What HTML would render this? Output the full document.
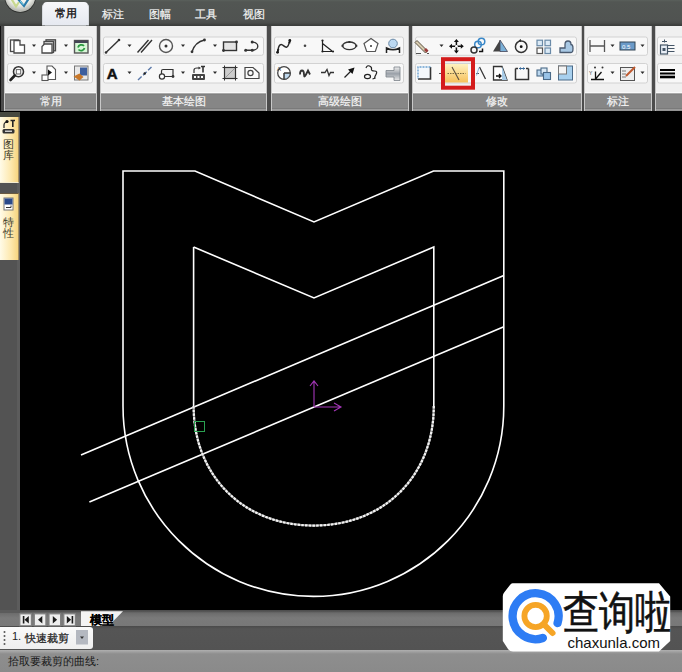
<!DOCTYPE html>
<html><head><meta charset="utf-8">
<style>
*{margin:0;padding:0;box-sizing:border-box}
html,body{width:682px;height:672px;overflow:hidden;background:#000;font-family:"Liberation Sans",sans-serif}
.a{position:absolute}
#top{left:0;top:0;width:682px;height:26px;background:linear-gradient(#5a605c 0,#525653 2px,#505351 20px,#4a4c4a 23px,#3c3e3c 25px)}
#rib{left:0;top:26px;width:682px;height:86px;background:#4c4c4c}
.grp{position:absolute;top:26px;height:85px;background:#f0f0f0;border-left:1px solid #c8c8c8;border-right:1px solid #c8c8c8}
.gt{position:absolute;left:0;right:0;bottom:0;height:19.5px;background:linear-gradient(#fafafa 0,#fafafa 1px,#7a7a7a 1.8px,#868686 3px,#868686 15.5px,#7a7a7a 16.5px,#9a9a9a 17.5px,#8a8a8a 19.5px);color:#f6f6f6;font-size:11px;text-align:center;line-height:18px;-webkit-text-stroke:0.2px #f6f6f6}
.bg{position:absolute;height:18px;border:1px solid #d6d6d6;border-radius:2px;background:#f6f6f6}
.tab{color:#f4f4f4;font-size:11px;top:7px;-webkit-text-stroke:0.2px #f4f4f4}
#canvas{left:20px;top:112px;width:662px;height:498px;background:#000}
#lstrip{left:0;top:112px;width:20px;height:498px;background:linear-gradient(90deg,#535353 0,#535353 16.5px,#5c5c5c 17px,#5c5c5c 20px)}
</style></head><body>
<div class="a" id="top"></div>
<div class="a" id="rib"></div>
<!-- logo -->
<svg class="a" style="left:0;top:0" width="42" height="18">
 <defs><radialGradient id="lg" cx="50%" cy="35%" r="60%"><stop offset="0" stop-color="#ffffff"/><stop offset=".7" stop-color="#eef0ea"/><stop offset="1" stop-color="#b8bab4"/></radialGradient></defs>
 <circle cx="20.2" cy="-3" r="15.8" fill="#2e302e"/>
 <circle cx="20.2" cy="-3" r="15" fill="url(#lg)"/>
 <path d="M11.5,-1 L16,6.5 L19,2" stroke="#c8d890" stroke-width="2.2" fill="none"/>
 <path d="M18,-1 L24,6 L28.5,-1" stroke="#2a7aa8" stroke-width="2.2" fill="none"/>
 <path d="M20,1 L23.5,5" stroke="#7ad8f0" stroke-width="1" fill="none"/>
</svg>
<!-- active tab -->
<div class="a" style="left:43px;top:2px;width:44.5px;height:22.5px;background:linear-gradient(#f6f7fa,#e6e9f0);border-radius:4px 4px 0 0;box-shadow:-1.5px 1px 0 -0.5px #d8dbe0,1.5px 1px 0 -0.5px #d8dbe0"></div>
<div class="a" style="left:54.5px;top:6px;font-size:11px;color:#111;-webkit-text-stroke:0.35px #111">常用</div>
<div class="a tab" style="left:102px">标注</div>
<div class="a tab" style="left:149px">图幅</div>
<div class="a tab" style="left:195px">工具</div>
<div class="a tab" style="left:243px">视图</div>

<div class="grp" style="left:4px;width:93px"><div class="gt">常用</div></div>
<div class="grp" style="left:100px;width:167px"><div class="gt">基本绘图</div></div>
<div class="grp" style="left:271px;width:138px"><div class="gt">高级绘图</div></div>
<div class="grp" style="left:412px;width:170px"><div class="gt">修改</div></div>
<div class="grp" style="left:584px;width:68px"><div class="gt">标注</div></div>
<div class="grp" style="left:655px;width:40px"><div class="gt"></div></div>


<svg class="a" style="left:0;top:0" width="682" height="112">
 <defs>
  <linearGradient id="gy" x1="0" y1="0" x2="0" y2="1"><stop offset="0" stop-color="#fff3c0"/><stop offset="1" stop-color="#f6c05a"/></linearGradient>
  <linearGradient id="cyl" x1="0" y1="0" x2="0" y2="1"><stop offset="0" stop-color="#f0f0f0"/><stop offset=".5" stop-color="#9aa0a8"/><stop offset="1" stop-color="#e8e8e8"/></linearGradient>
 </defs>
 <!-- button group frames -->
 <g fill="#f8f8f8" stroke="#d2d2d2" stroke-width="1">
  <rect x="7.5" y="37" width="85" height="18.3" rx="2"/>
  <rect x="7.5" y="63.5" width="85" height="19.5" rx="2"/>
  <rect x="103.5" y="37" width="160" height="18.3" rx="2"/>
  <rect x="103.5" y="63.5" width="160" height="19.5" rx="2"/>
  <rect x="274.5" y="37" width="129" height="18.3" rx="2"/>
  <rect x="274.5" y="63.5" width="129" height="19.5" rx="2"/>
  <rect x="415.5" y="37" width="161" height="18.3" rx="2"/>
  <rect x="415.5" y="63.5" width="161" height="19.5" rx="2"/>
  <rect x="587.5" y="37" width="60" height="18.3" rx="2"/>
  <rect x="587.5" y="63.5" width="60" height="19.5" rx="2"/>
  <rect x="657.5" y="37" width="40" height="18.3" rx="2"/>
  <rect x="657.5" y="63.5" width="40" height="19.5" rx="2"/>
 </g>
 <!-- dropdown arrows -->
 <g fill="#2a2a2a">
  <path d="M32,44.5h4l-2,2.5z"/><path d="M64,44.5h4l-2,2.5z"/>
  <path d="M32,71.5h4l-2,2.5z"/><path d="M64,71.5h4l-2,2.5z"/>
  <path d="M127.5,44.5h4l-2,2.5z"/><path d="M181,44.5h4l-2,2.5z"/><path d="M213,44.5h4l-2,2.5z"/>
  <path d="M127.5,71.5h4l-2,2.5z"/><path d="M181,71.5h4l-2,2.5z"/><path d="M213,71.5h4l-2,2.5z"/>
  <path d="M439.5,44.5h4l-2,2.5z"/>
  <path d="M610.5,44.5h4l-2,2.5z"/><path d="M640.5,44.5h4l-2,2.5z"/>
  <path d="M610.5,71.5h4l-2,2.5z"/><path d="M640.5,71.5h4l-2,2.5z"/>
 </g>
 <!-- G1 R1 -->
 <g fill="#fff" stroke="#4a4a4a" stroke-width="1.3">
  <rect x="10.5" y="40" width="8" height="11.5"/>
  <path d="M14,40.5h6v4.5h4.5v8h-10.5z"/>
  <rect x="46" y="39.8" width="9.5" height="11" fill="#bbb"/>
  <rect x="44" y="41.5" width="9.5" height="11" fill="#ddd"/>
  <path d="M44.5,44h7.5v9h-10v-6.5z"/>
 </g>
 <rect x="74.5" y="40.5" width="13.5" height="12.5" fill="#d8f5d8" stroke="#555" stroke-width="1.4"/>
 <rect x="74.5" y="40.5" width="13.5" height="2.5" fill="#445"/>
 <path d="M78,47.5a3.5,3.5 0 0 1 6,-1.5M84.5,48a3.5,3.5 0 0 1 -6,1.5" fill="none" stroke="#2a9a40" stroke-width="1.8"/>
 <!-- G1 R2 -->
 <circle cx="18.5" cy="71.7" r="5" fill="#fff" stroke="#333" stroke-width="1.6"/>
 <rect x="16.3" y="69.6" width="4.4" height="4.4" fill="none" stroke="#666" stroke-width="1"/>
 <path d="M14.8,75.5L10.5,80" stroke="#222" stroke-width="2.6" stroke-linecap="round"/>
 <g fill="#fff" stroke="#555" stroke-width="1.1">
  <path d="M47,66h5l3.5,3.5v10h-8.5z"/>
  <rect x="42" y="75" width="6" height="5.5"/>
 </g>
 <path d="M48,69.5l4,3l-4,3z" fill="#111"/>
 <rect x="74.5" y="66" width="13.5" height="14" fill="#e8e8e8" stroke="#777" stroke-width="1"/>
 <rect x="80" y="67.5" width="7" height="8" fill="#3c5e9e"/>
 <path d="M73.5,76.5l6,-3l4,3.5l-4,3.5z" fill="#c8782a"/>
 <!-- G2 R1 -->
 <g stroke="#333" stroke-width="1.4" fill="none">
  <path d="M106,52.5L119,40"/>
  <path d="M137.5,52.5L148.5,40M141,52.5L152,40"/>
  <circle cx="166" cy="46" r="6.5" stroke="#555"/>
  <path d="M192,51.8Q195,42 204.5,40"/>
  <rect x="223.5" y="42" width="13" height="8.5" fill="#e4e4e4"/>
  <path d="M245.7,50.2h6.5a5.6,4.05 0 0 0 0,-8.1"/>
 </g>
 <g fill="#333">
  <circle cx="106" cy="52.5" r="1.3"/><circle cx="119" cy="40" r="1.3"/>
  <circle cx="166" cy="46" r="1.5"/>
  <circle cx="192" cy="51.8" r="1.4"/><circle cx="204.5" cy="40" r="1.4"/>
  <circle cx="236.5" cy="42" r="1.4"/><circle cx="223.5" cy="50.5" r="1.4"/>
  <circle cx="245.7" cy="50.2" r="1.5"/><circle cx="252.2" cy="50.2" r="1.5"/><circle cx="252.2" cy="42.1" r="1.5"/>
 </g>
 <!-- G2 R2 -->
 <text x="106.8" y="78.8" font-family="Liberation Sans" font-weight="bold" font-size="15" fill="#111" stroke="#111" stroke-width="0.5">A</text>
 <path d="M138,80L151.5,67" stroke="#5a78a8" stroke-width="1.4" stroke-dasharray="5 2"/>
 <circle cx="144.7" cy="73.5" r="1.2" fill="#222"/>
 <g stroke="#333" stroke-width="1.2" fill="none">
  <path d="M161.5,76v-5q0,-1.5 1.5,-1.5h10v7h-9" fill="#f4f4f4"/>
  <circle cx="162" cy="76.5" r="2.6" fill="#fff"/>
 </g>
 <circle cx="173" cy="76.5" r="1.4" fill="#333"/>
 <g fill="#333">
  <rect x="192" y="74" width="13" height="6" rx="1" fill="#444"/>
 </g>
 <g fill="#fff"><rect x="194" y="76" width="2" height="2"/><rect x="197.5" y="76" width="2" height="2"/><rect x="201" y="76" width="2" height="2"/></g>
 <path d="M194,73v-3q0,-2 3,-2h2" stroke="#333" stroke-width="1.2" fill="none"/>
 <path d="M198.5,66.5l2.5,1.5l-2.5,1.5z" fill="#333"/>
 <path d="M201,66.5h4M203,66.5v6" stroke="#333" stroke-width="1.6"/>
 <rect x="224.5" y="67.5" width="11" height="11" fill="#ccc" stroke="#333" stroke-width="1.2"/>
 <path d="M222.5,67.5h15M222.5,78.5h15M224.5,65.5v15M235.5,65.5v15" stroke="#333" stroke-width="1"/>
 <path d="M225,78l10,-10" stroke="#999" stroke-width="1"/>
 <path d="M245,67.5h8l6,5.5v5.5h-14z" fill="#fafafa" stroke="#444" stroke-width="1.2"/>
 <circle cx="250.5" cy="73" r="2.6" fill="none" stroke="#444" stroke-width="1.2"/>
 <!-- G3 R1 -->
 <path d="M277.8,52 C278.2,47 279.2,44.6 281.2,44.6 C283.2,44.6 284.5,47.6 286.5,47.2 C288.5,46.8 289,43.5 289.6,41" stroke="#2a2a2a" stroke-width="1.5" fill="none"/>
 <path d="M276.5,53.5l0.8,-4.5l2.2,0.5z M290.8,39.5l-0.5,4l-2.2,-0.5z" fill="#1a1a1a"/>
 <circle cx="289.8" cy="40.5" r="1.4" fill="#1a1a1a"/><circle cx="277.6" cy="52.3" r="1.4" fill="#1a1a1a"/>
 <circle cx="305" cy="45.8" r="1.3" fill="#444"/>
 <path d="M322.5,40.5v11h10.5M322.5,43.5l9.5,7.5" stroke="#222" stroke-width="1.2" fill="none"/>
 <circle cx="322.5" cy="40.5" r="1.1" fill="#222"/><circle cx="333" cy="51.5" r="1.1" fill="#222"/><circle cx="322.5" cy="51.5" r="1.1" fill="#222"/>
 <ellipse cx="349.4" cy="45.8" rx="6.8" ry="3.8" fill="none" stroke="#333" stroke-width="1.3"/>
 <g fill="#333"><rect x="341.5" y="44.8" width="2" height="2"/><rect x="355.3" y="44.8" width="2" height="2"/><rect x="348.4" y="41" width="2" height="2"/></g>
 <path d="M371,38.5l7,5l-2.7,8h-8.6l-2.7,-8z" fill="#fff" stroke="#555" stroke-width="1.2"/>
 <circle cx="371" cy="46" r="1" fill="#333"/>
 <circle cx="393" cy="43.5" r="4.3" fill="#bcd8f0" stroke="#6a8aa8" stroke-width="1"/>
 <path d="M386.5,53v-5q6.5,3.5 13,0v5" fill="none" stroke="#222" stroke-width="1.5"/>
 <!-- G3 R2 -->
 <circle cx="284" cy="73" r="6.3" fill="#fff" stroke="#444" stroke-width="1.3"/>
 <path d="M284,73h6.3a6.3,6.3 0 0 1 -6.3,6.3z" fill="#bfd8ee" stroke="#444" stroke-width="1"/>
 <path d="M284,73v6.3M284,73h6.3" stroke="#333" stroke-width="1"/>
 <text x="277" y="71" font-size="6" fill="#333">A</text>
 <path d="M300,74.5q0,-4 2,-4t2,4t2,0t2,-4t2,4" stroke="#333" stroke-width="1.8" fill="none"/>
 <path d="M321,72.5h4l2,-3l2,6l1.5,-3h3.5" stroke="#333" stroke-width="1.3" fill="none"/>
 <path d="M344.5,77.5L351.5,70.5" stroke="#222" stroke-width="1.3"/>
 <path d="M354.5,67.5l-2,6.5l-4.5,-4.5z" fill="#111"/>
 <path d="M366,68q1,-3 3.5,-2t2,3t3,2t1.5,3.5t-1,3.5t-2.5,1" stroke="#222" stroke-width="1.2" fill="none"/>
 <ellipse cx="367.5" cy="76.5" rx="3" ry="2.2" fill="none" stroke="#222" stroke-width="1.2"/>
 <path d="M386,70.5h8v-3.5h6v13.5h-6v-3.5h-8z" fill="url(#cyl)" stroke="#7a8088" stroke-width=".8"/>
 <!-- G4 R1 -->
 <path d="M417,40.5l10.5,10.5l-2,2l-10.5,-10.5z" fill="#d8ccb0" stroke="#5a5040" stroke-width="1"/>
 <path d="M424,50l2,-2l2.5,2.5l-2,2z" fill="#9a3a3a"/>
 <path d="M416,53.5h5M427,53.5h2" stroke="#555" stroke-width="1"/>
 <g fill="#111">
  <path d="M456.4,39l2.5,3h-5z M456.4,53.5l2.5,-3h-5z M449,46.3l3,-2.5v5z M463.8,46.3l-3,-2.5v5z"/>
 </g>
 <path d="M456.4,41v10.6M451,46.3h10.8" stroke="#111" stroke-width="1.5"/>
 <circle cx="456.4" cy="46.3" r="1.3" fill="#fff"/>
 <circle cx="478" cy="44.5" r="3.3" fill="none" stroke="#3a88c8" stroke-width="1.5"/>
 <circle cx="481.5" cy="41.5" r="3.3" fill="none" stroke="#3a88c8" stroke-width="1.5"/>
 <circle cx="474" cy="50" r="3" fill="none" stroke="#333" stroke-width="1.5"/>
 <path d="M479,51.5h3.5v-3" stroke="#111" stroke-width="1.5" fill="none"/>
 <path d="M500,40l-7,11.5h7z" fill="#444"/>
 <path d="M500,40l7.5,11.5h-7.5z" fill="#7ab0d8" stroke="#445" stroke-width=".8"/>
 <circle cx="521.2" cy="46.7" r="5.8" fill="none" stroke="#333" stroke-width="1.5"/>
 <circle cx="521.2" cy="46.7" r="1.4" fill="#111"/>
 <path d="M518.5,40.5l2.5,-1.5v3z" fill="#333"/>
 <g fill="#dceaf6" stroke="#6a8aa8" stroke-width="1.2">
  <rect x="537" y="40.2" width="5.5" height="5.5"/><rect x="545" y="40.2" width="5.5" height="5.5"/>
  <rect x="537" y="48" width="5.5" height="5.5" fill="#fff" stroke="#555"/><rect x="545" y="48" width="5.5" height="5.5"/>
 </g>
 <path d="M560,52.5v-4.5h5v-3.5q0,-3.5 3,-3.5t3,3.5q2,0 2,4t-2,4z" fill="#a8c8e4" stroke="#4a5a70" stroke-width="1.3"/>
 <!-- G4 R2 -->
 <rect x="418" y="67" width="12.5" height="12" fill="#f4f8fc"/>
 <path d="M418,79h12.5v-12" stroke="#333" stroke-width="1.6" fill="none"/>
 <path d="M430.5,67h-12.5v12" stroke="#6aa0d0" stroke-width="1.4" fill="none" stroke-dasharray="2 1"/>
 <path d="M439,73.5h2" stroke="#555" stroke-width="1"/>
 <path d="M476,73.5h3" stroke="#555" stroke-width="1"/>
 <path d="M479.5,67l6,12" stroke="#333" stroke-width="1.3"/>
 <path d="M479,67.5l-2.5,8" stroke="#8ab4d8" stroke-width="1"/>
 <path d="M493.5,66.5h8.5l5,13.5h-13.5z" fill="#fff" stroke="#333" stroke-width="1.3"/>
 <path d="M502,66.5l5,13.5h-5z" fill="#a8cce8"/>
 <path d="M496,76h5M499,74l2,2l-2,2" stroke="#111" stroke-width="1.3" fill="none"/>
 <path d="M515.5,68.5h2.5M526,68.5h2.5M515.5,68.5v11h13v-11" fill="none" stroke="#333" stroke-width="1.5"/>
 <path d="M519,68.5l2,-1.5v3zM525,68.5l-2,-1.5v3z" fill="#3a6a9a"/>
 <path d="M519,68.5h6" stroke="#3a6a9a" stroke-width="1"/>
 <g stroke="#4a6a88" stroke-width="1.1">
  <rect x="537" y="70" width="6" height="6" fill="#bcd8f0"/>
  <rect x="541" y="68" width="6" height="6" fill="#dceaf6"/>
  <rect x="543.5" y="72.5" width="7" height="7" fill="#9ac4e8"/>
 </g>
 <rect x="558.5" y="66" width="14" height="14" fill="#a8d0ee" stroke="#4a6a88" stroke-width="1"/>
 <rect x="558.5" y="66" width="8" height="8" fill="#f4f4f4" stroke="#777" stroke-width="1"/>
 <!-- G5 R1 -->
 <path d="M590,40v12M604.5,40v12M590,46h14.5" stroke="#555" stroke-width="1.3"/>
 <rect x="620" y="42" width="15" height="8" fill="#6a9ac8" stroke="#345" stroke-width="1"/>
 <text x="622" y="48.8" font-size="6" fill="#fff">0.5</text>
 <!-- G5 R2 -->
 <path d="M591,79.5h13M595.5,79.5v-8M595.5,79l6,-7" stroke="#111" stroke-width="1.3" fill="none"/>
 <text x="589" y="75" font-size="5" fill="#333">Y</text>
 <circle cx="595" cy="67.5" r="1" fill="#333"/><circle cx="602.5" cy="67.5" r="1" fill="#333"/>
 <rect x="620.5" y="67.5" width="14" height="13" fill="#eee" stroke="#555" stroke-width="1"/>
 <path d="M622,71h4M622,74h4M622,77h4" stroke="#777" stroke-width="1"/>
 <path d="M626,76l9,-9" stroke="#c05a30" stroke-width="2"/>
 <!-- G6 -->
 <rect x="660.5" y="45" width="7" height="9" fill="#e8eef6" stroke="#456" stroke-width="1.2"/>
 <rect x="662.5" y="48" width="3" height="3" fill="#456"/>
 <path d="M662,41.5h5M664.5,39.5v3M668,45.5h6.5M668,48.5h6.5M668,51.5h6.5" stroke="#456" stroke-width="1"/>
 <path d="M660,70h15M660,73.5h15" stroke="#000" stroke-width="1.8"/>
 <path d="M660,77h15" stroke="#000" stroke-width="2.6"/>
 <!-- trim highlighted button with red box -->
 <rect x="445" y="64" width="23" height="18.5" fill="url(#gy)"/>
 <path d="M447.5,73.5h18" stroke="#7a6a40" stroke-width="1" stroke-dasharray="1.5 1"/>
 <path d="M452,67l7,13" stroke="#5a5040" stroke-width="1.1"/>
 <rect x="443" y="59.2" width="30" height="28.5" fill="none" stroke="#d41c1c" stroke-width="4"/>
</svg>

<div class="a" id="lstrip"></div>
<div class="a" style="left:0;top:26px;width:1px;height:86px;background:#111"></div>
<div class="a" id="canvas"></div>

<!-- left strip tabs -->
<div class="a" style="left:0;top:111px;width:682px;height:2px;background:#000"></div>
<div class="a" style="left:0;top:112px;width:20px;height:5px;background:#46483f"></div>
<div class="a" style="left:0;top:117px;width:19px;height:65.5px;background:linear-gradient(90deg,#fffbe8,#fde8ae 60%,#f7d580);border-right:1px solid #a89060;border-bottom:1px solid #f4ecd0"></div>
<div class="a" style="left:0;top:193px;width:19px;height:67px;background:linear-gradient(90deg,#fffbe8,#fde8ae 60%,#f7d580);border-right:1px solid #a89060;border-top:1.5px solid #6a5a40"></div>
<svg class="a" style="left:0;top:114px" width="20" height="150">
 <rect x="2.5" y="15" width="12" height="4.5" rx="1.5" fill="#333"/>
 <rect x="5" y="16.5" width="7" height="1.5" fill="#ccc"/>
 <path d="M4,14v-3q0,-3 4,-3" stroke="#222" stroke-width="1.2" fill="none"/>
 <circle cx="7" cy="7.5" r="1.6" fill="#111"/>
 <path d="M10.5,6.5h4.5M12.8,6.5v6.5" stroke="#222" stroke-width="1.6"/>
 <rect x="4" y="84" width="9" height="12" fill="#fff" stroke="#777" stroke-width="1"/>
 <rect x="4.5" y="84.5" width="8" height="6" fill="#2a4a8a"/>
 <path d="M6,93.5h5v-2" stroke="#333" stroke-width="1" fill="none"/>
</svg>
<div class="a" style="left:3px;top:139px;width:11px;font-size:10.5px;line-height:11px;color:#3a3a2a">图<br>库</div>
<div class="a" style="left:3px;top:217px;width:11px;font-size:10.5px;line-height:11px;color:#3a3a2a">特<br>性</div>
<!-- bottom -->
<div class="a" style="left:0;top:610px;width:682px;height:16px;background:linear-gradient(#4e4e4e 0,#4e4e4e 1px,#6c6c6c 3px,#7a7a7a 8px,#787878 100%)"></div>
<div class="a" style="left:0;top:610px;width:20px;height:3px;background:#5b5b5b"></div>
<div class="a" style="left:0;top:626px;width:682px;height:24px;background:linear-gradient(#4a4a4a,#555 3px,#535353)"></div>
<div class="a" style="left:0;top:650px;width:682px;height:22px;background:linear-gradient(#b0b0b0,#8e8e8e 4px,#8a8a8a)"></div>
<svg class="a" style="left:0;top:608px" width="140" height="20">
 <g fill="#ededed" stroke="#808080" stroke-width="1.2">
  <rect x="19.8" y="5.8" width="11.6" height="12"/><rect x="34.3" y="5.8" width="11.6" height="12"/>
  <rect x="49" y="5.8" width="11.6" height="12"/><rect x="63.8" y="5.8" width="11.6" height="12"/>
 </g>
 <g fill="#1a1a1a">
  <rect x="22.8" y="8" width="1.6" height="7.5"/><path d="M28.8,8v7.5l-4.3,-3.75z"/>
  <path d="M42.3,8v7.5l-4.3,-3.75z"/>
  <path d="M52.8,8v7.5l4.3,-3.75z"/>
  <path d="M66.8,8v7.5l4.3,-3.75z"/><rect x="71.6" y="8" width="1.6" height="7.5"/>
 </g>
 <path d="M81,3.2h42l-14.5,14.8h-27.5z" fill="#f4f4f4"/>
</svg>
<div class="a" style="left:89.5px;top:611.5px;font-size:12px;font-weight:bold;color:#000;-webkit-text-stroke:0.2px #000">模型</div>
<div class="a" style="left:0;top:627px;width:93px;height:22px;background:linear-gradient(#fafafa,#eeeeee);border-radius:0 3px 3px 0"></div>
<svg class="a" style="left:0;top:627px" width="100" height="22">
 <g fill="#555"><circle cx="4.5" cy="5" r="1"/><circle cx="4.5" cy="9" r="1"/><circle cx="4.5" cy="13" r="1"/><circle cx="4.5" cy="17" r="1"/></g>
 <rect x="76" y="3" width="12" height="14.5" fill="#b4b8c0"/>
 <path d="M80,9.5h4l-2,2.5z" fill="#333"/>
</svg>
<div class="a" style="left:12px;top:630px;font-size:11px;color:#222">1.</div>
<div class="a" style="left:25px;top:631px;font-size:11px;color:#222;-webkit-text-stroke:0.25px #222">快速裁剪</div>
<div class="a" style="left:8px;top:654px;font-size:11px;color:#1a1a1a">拾取要裁剪的曲线:</div>
<svg class="a" style="left:0;top:0" width="682" height="672">
 <g fill="none" stroke="#fff" stroke-width="1.6">
  <path d="M123,171 L195,171 L314,222 L433.5,171 L503.8,171 L503.8,406 C503.80,511.16 418.56,596.40 313.40,596.40 C208.24,596.40 123.00,511.16 123.00,406.00 Z"/>
  <path d="M193.6,247 L314,298 L433.8,247 L433.8,406"/>
  <path d="M193.6,406 L193.6,247"/>
  <path d="M81,455 L503.8,275.5"/>
  <path d="M89.4,502 L503.8,326.7"/>
 </g>
 <path d="M433.80,406.00 C433.80,475.97 383.96,525.60 313.70,525.60 C243.44,525.60 193.60,475.97 193.60,406.00" fill="none" stroke="#8a8a8a" stroke-width="2.2"/>
 <path d="M433.80,406.00 C433.80,475.97 383.96,525.60 313.70,525.60 C243.44,525.60 193.60,475.97 193.60,406.00" fill="none" stroke="#f4f4f4" stroke-width="2.2" stroke-dasharray="2.5 1.2"/>
 <rect x="194.5" y="421.5" width="10" height="10" fill="none" stroke="#2aa050" stroke-width="1"/>
 <g stroke="#a436b8" stroke-width="1.1" fill="none">
  <path d="M314,407 L314,381 M310,386 L314,381 L318,386"/>
  <path d="M314,407 L341,407 M334,403 L341,407 L334,411"/>
 </g>
</svg>
<!-- watermark -->
<svg class="a" style="left:0;top:0" width="682" height="672">
 <path d="M512.5,583.3 H659 L670.2,596.5 V641 L659,651.6 H513 Q510,651.6 508,649 L502.8,641 V596 Q502.8,594 504.5,592 L510,585 Q511,583.3 512.5,583.3 Z" fill="#fff"/>
 <path d="M557.52,623.15 A23,23 0 1 0 542.90,638.01" fill="none" stroke="#2d7cf4" stroke-width="8.3" stroke-linecap="round"/>
 <circle cx="535.6" cy="616" r="11.2" fill="none" stroke="#f6a526" stroke-width="5.8"/>
 <path d="M543.5,624 L552.5,633" stroke="#f6a526" stroke-width="6" stroke-linecap="round"/>
</svg>
<div class="a" style="left:563px;top:588px;font-family:'Liberation Serif',serif;font-size:36px;line-height:40px;color:#111;-webkit-text-stroke:0.5px #111;white-space:nowrap;transform:scaleY(1.245);transform-origin:0 0">查询啦</div>
<div class="a" style="left:567.5px;top:634px;font-family:'Liberation Sans',sans-serif;font-size:15px;line-height:18px;color:#111;white-space:nowrap">chaxunla.com</div>
</body></html>
